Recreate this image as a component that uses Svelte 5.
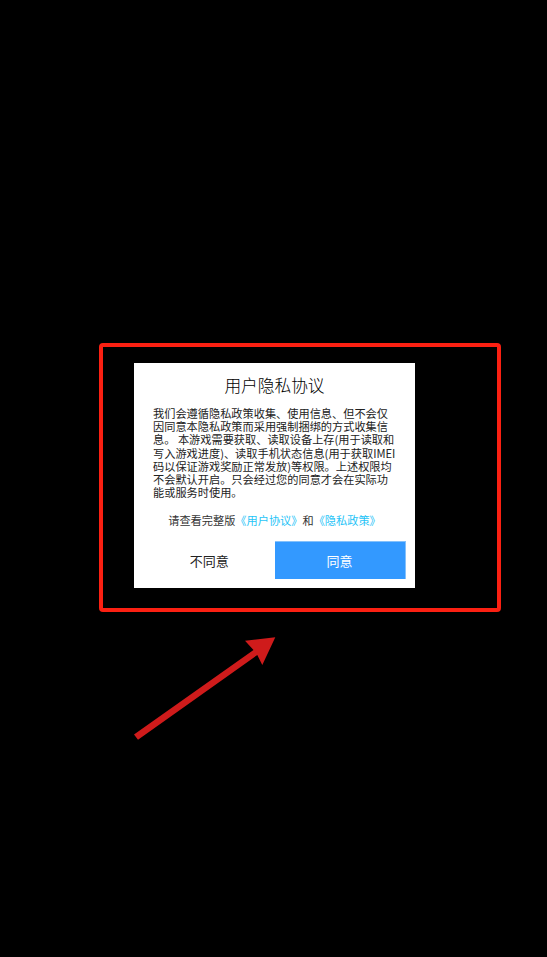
<script>
	let lines = [
		"我们会遵循隐私政策收集、使用信息、但不会仅",
		"因同意本隐私政策而采用强制捆绑的方式收集信",
		"息。 本游戏需要获取、读取设备上存(用于读取和",
		"写入游戏进度)、读取手机状态信息(用于获取IMEI",
		"码以保证游戏奖励正常发放)等权限。上述权限均",
		"不会默认开启。只会经过您的同意才会在实际功",
		"能或服务时使用。"
	];
</script>

<div class="page">
	<div class="frame">
		<div class="dialog">
			<h1>用户隐私协议</h1>
			<div class="body">
				{#each lines as line}
					<div>{line}</div>
				{/each}
			</div>
			<div class="links">请查看完整版<a href="#terms">《用户协议》</a>和<a href="#privacy">《隐私政策》</a></div>
			<div class="buttons">
				<button class="no">不同意</button>
				<button class="yes">同意</button>
			</div>
		</div>
	</div>

	<svg class="arrow" width="547" height="957" viewBox="0 0 547 957">
		<polygon fill="#cf1b1b" points="134,734.5 253.5,650 245,640.7 275.3,637.3 262.3,665 257.3,655 138,739.8" />
	</svg>
</div>

<style>
	:global(body) {
		margin: 0;
		background: #000;
	}
	.page {
		position: relative;
		height: 957px;
		padding: 343px 0 0 99px;
		box-sizing: border-box;
		background: #000;
		overflow: hidden;
		font-family: "Noto Sans CJK SC", "Liberation Sans", sans-serif;
	}
	.frame {
		width: 402px;
		height: 269px;
		box-sizing: border-box;
		border: 4px solid #fb2012;
		border-radius: 4px;
		padding: 16px 0 0 31px;
	}
	.dialog {
		width: 281px;
		height: 225px;
		box-sizing: border-box;
		background: #fff;
		padding-top: 11px;
	}
	h1 {
		margin: 0;
		font-size: 16.7px;
		line-height: 22px;
		font-weight: 300;
		text-align: center;
		color: #000;
	}
	.body {
		margin: 11px 0 0 19px;
		font-size: 11.2px;
		line-height: 13.2px;
		color: #222;
		white-space: nowrap;
	}
	.links {
		margin-top: 14px;
		font-size: 11.2px;
		line-height: 14px;
		text-align: center;
		color: #333;
		white-space: nowrap;
	}
	.links a {
		color: #1fc4f7;
		text-decoration: none;
	}
	.buttons {
		display: flex;
		justify-content: space-between;
		margin: 14px 9.5px 0 10px;
	}
	button {
		width: 131.5px;
		height: 38px;
		padding: 0;
		border: 0;
		background: none;
		font: inherit;
		font-size: 13px;
		color: #222;
	}
	button.yes {
		background: #3399ff;
		border-top: 1px solid #85c1fb;
		border-right: 1px solid #85c1fb;
		color: #fff;
	}
	.arrow {
		position: absolute;
		left: 0;
		top: 0;
	}
</style>
